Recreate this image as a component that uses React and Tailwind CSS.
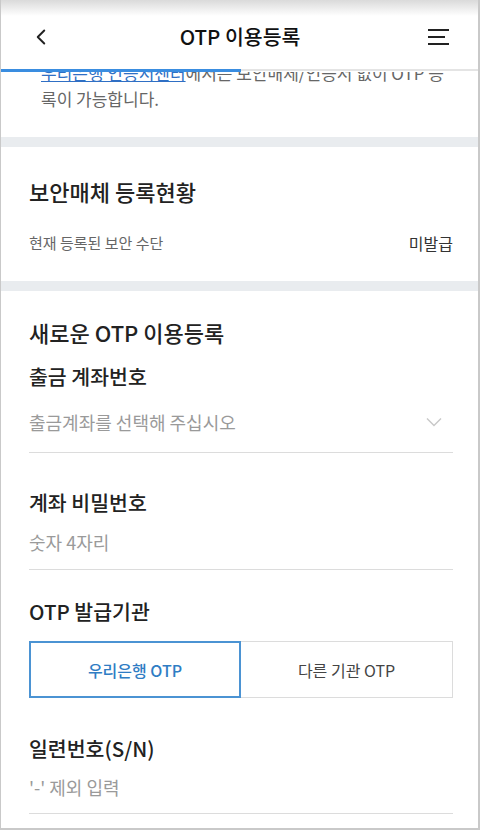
import { ChevronLeft } from "lucide-react";

function Field({ label, children, className = "" }) {
  return (
    <div className={className}>
      <p className="text-[20.5px] leading-[28px] font-medium text-[#222]">{label}</p>
      {children}
    </div>
  );
}

function InputLine({ placeholder, mt = "mt-4", pb = "pb-4", chevron }) {
  return (
    <div className={`${mt} ${pb} flex items-center justify-between border-b border-[#dcdcdc]`}>
      <span className="text-[18px] leading-[24px] text-[#9a9a9a]">{placeholder}</span>
      {chevron && (
        <svg width="16" height="10" viewBox="0 0 16 10" className="mr-[11px]">
          <path d="M1 1.5 L8 8.5 L15 1.5" fill="none" stroke="#c8c8c8" strokeWidth="1.4" />
        </svg>
      )}
    </div>
  );
}

export default function App() {
  return (
    <div className="font-['Noto_Sans_CJK_KR','Noto_Sans',sans-serif] w-[480px] h-[830px] overflow-hidden bg-white border-l border-r-2 border-b-2 border-[#c9c9c9] flex flex-col">
      {/* HEADER */}
      <div className="h-[69px] shrink-0 bg-[linear-gradient(to_bottom,#dadada_0px,#ffffff_16px)] flex items-center justify-between pl-[29px] pr-[28px] pt-[4px]">
        <ChevronLeft size={26} strokeWidth={1.8} className="text-[#222] -ml-[2px]" />
        <p className="text-[20.5px] font-medium text-[#111]">OTP 이용등록</p>
        <svg width="24" height="18" viewBox="0 0 24 18">
          <rect x="2" y="1" width="21" height="2" fill="#222" />
          <rect x="2" y="8" width="17" height="2" fill="#222" />
          <rect x="2" y="15" width="21" height="2" fill="#222" />
        </svg>
      </div>

      {/* progress */}
      <div className="flex items-start h-[3px] shrink-0 relative z-10">
        <div className="w-[240px] h-[3px] bg-[#3a8de0]" />
        <div className="flex-1 h-[2px] bg-[#e4e4e4]" />
      </div>

      {/* notice (scrolled) */}
      <div className="overflow-hidden pb-[25px] shrink-0">
        <p className="-mt-[12px] px-10 text-[17px] leading-[26px] text-[#666]">
          <span className="whitespace-nowrap">
            <span className="text-[#2f6fc4] underline">우리은행 인증서센터</span>에서는 보안매체/인증서 없이 OTP 등
          </span>
          <br />
          록이 가능합니다.
        </p>
      </div>

      <div className="h-[10px] bg-[#e9ecef] shrink-0" />

      {/* 보안매체 등록현황 */}
      <section className="pl-7 pr-[25px] pt-[29px] pb-[27px] shrink-0">
        <h2 className="text-[22px] leading-[30px] font-medium text-[#222]">보안매체 등록현황</h2>
        <div className="mt-[26px] flex items-center justify-between leading-[22px]">
          <span className="text-[15px] text-[#666]">현재 등록된 보안 수단</span>
          <span className="text-[16px] text-[#333]">미발급</span>
        </div>
      </section>

      <div className="h-[10px] bg-[#e9ecef] shrink-0" />

      {/* 새로운 OTP 이용등록 */}
      <section className="pl-7 pr-[25px] pt-[26px] shrink-0">
        <h2 className="text-[22px] leading-[30px] font-medium text-[#222]">새로운 OTP 이용등록</h2>

        <Field label="출금 계좌번호" className="mt-[15px]">
          <InputLine placeholder="출금계좌를 선택해 주십시오" mt="mt-[20px]" pb="pb-[18px]" chevron />
        </Field>

        <Field label="계좌 비밀번호" className="mt-[35px]">
          <InputLine placeholder="숫자 4자리" mt="mt-[14px]" pb="pb-[15px]" />
        </Field>

        <Field label="OTP 발급기관" className="mt-[27px]">
          <div className="mt-[16px] grid grid-cols-2 h-[57px]">
            <button className="border-2 border-[#4b93d3] text-[16px] font-medium text-[#2f7dc4]">
              우리은행 OTP
            </button>
            <button className="border border-l-0 border-[#dcdcdc] text-[16px] text-[#444]">
              다른 기관 OTP
            </button>
          </div>
        </Field>

        <Field label="일련번호(S/N)" className="mt-[36px]">
          <InputLine placeholder="'-' 제외 입력" mt="mt-[13px]" pb="pb-[14px]" />
        </Field>
      </section>
    </div>
  );
}
